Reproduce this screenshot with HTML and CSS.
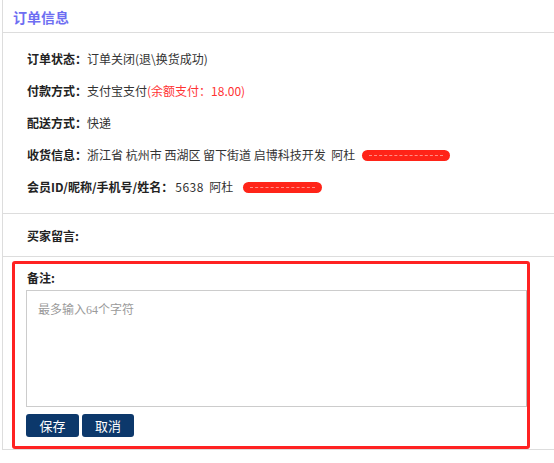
FILE: index.html
```html
<!DOCTYPE html>
<html lang="zh-CN">
<head>
    <meta charset="UTF-8">
    <meta name="viewport" content="width=device-width, initial-scale=1.0">
    <title>订单信息</title>
    <link rel="stylesheet" href="styles.css">
</head>
<body>
    <div class="panel">
        <div class="panel-head">订单信息</div>

        <!-- 订单基本信息 -->
        <div class="info">
            <div class="row"><span class="label">订单状态：</span>订单关闭(退\换货成功)</div>
            <div class="row"><span class="label">付款方式：</span>支付宝支付<span class="red">(余额支付：18.00)</span></div>
            <div class="row"><span class="label">配送方式：</span>快递</div>
            <div class="row"><span class="label">收货信息：</span>浙江省 杭州市 西湖区 留下街道 启博科技开发&nbsp; 阿杜<span class="mask mask-long"></span></div>
            <div class="row"><span class="label">会员ID/昵称/手机号/姓名：</span><span class="id">5638</span>&nbsp; 阿杜<span class="mask mask-short"></span></div>
        </div>

        <div class="message"><span class="label">买家留言:</span></div>

        <!-- 备注 -->
        <div class="remark">
            <div class="remark-box">
                <div class="remark-title">备注:</div>
                <textarea class="remark-input" placeholder="最多输入64个字符"></textarea>
                <div class="actions">
                    <button class="btn btn-save">保存</button>
                    <button class="btn">取消</button>
                </div>
            </div>
        </div>
    </div>
</body>
</html>
```

FILE: styles.css
```css
body {
    margin: 0;
    font-family: "Noto Sans CJK SC", "Noto Sans", sans-serif;
    font-size: 12px;
    color: #333;
    background-color: #fff;
}
.panel {
    margin-left: 2px;
    border-left: 1px solid #ddd;
    border-bottom: 1px solid #ddd;
}
.panel-head {
    height: 32px;
    line-height: 34px;
    padding-left: 10px;
    font-size: 14px;
    font-weight: bold;
    color: #6e6ef2;
    border-bottom: 1px solid #ddd;
}
.info {
    padding: 10px 0 10px 24px;
    border-bottom: 1px solid #ddd;
}
.row {
    line-height: 32px;
    white-space: nowrap;
}
.label {
    font-weight: bold;
    color: #222;
}
.id {
    margin-left: 2px;
    letter-spacing: 0.5px;
}
.red {
    color: #f33;
}
/* 打码的部分 */
.mask {
    display: inline-block;
    height: 11px;
    border-radius: 6px;
    background-color: #ff2418;
    vertical-align: -1px;
    position: relative;
}
.mask::after {
    content: "";
    position: absolute;
    left: 7px;
    right: 7px;
    top: 5px;
    border-top: 1px dashed #ff8f86;
}
.mask-long {
    width: 88px;
    margin-left: 7px;
}
.mask-short {
    width: 79px;
    margin-left: 10px;
}
.message {
    height: 42px;
    line-height: 43px;
    padding-left: 24px;
    border-bottom: 1px solid #ddd;
}
.remark {
    padding: 4px 0 0 9px;
}
.remark-box {
    width: 518px;
    box-sizing: border-box;
    border: 3px solid #ff2222;
    border-radius: 3px;
    padding: 0 0 9px 11px;
}
.remark-title {
    height: 26px;
    line-height: 27px;
    padding-left: 1px;
    font-weight: bold;
    color: #222;
}
.remark-input {
    display: block;
    width: 501px;
    height: 117px;
    box-sizing: border-box;
    border: 1px solid #ccc;
    border-right-color: #bbb;
    padding: 9px 11px;
    font-family: "Liberation Serif", "Noto Sans CJK SC", serif;
    font-size: 12px;
    resize: none;
    outline: none;
}
.remark-input::placeholder {
    color: #9a9a9a;
}
.actions {
    display: flex;
    gap: 3px;
    margin-top: 7px;
}
.btn {
    width: 52px;
    height: 23px;
    padding: 0;
    border: none;
    border-radius: 3px;
    background-color: #0c386b;
    color: #fff;
    font-family: "Noto Sans CJK SC", sans-serif;
    font-size: 13px;
    cursor: pointer;
}
.btn-save {
    width: 53px;
}
```
